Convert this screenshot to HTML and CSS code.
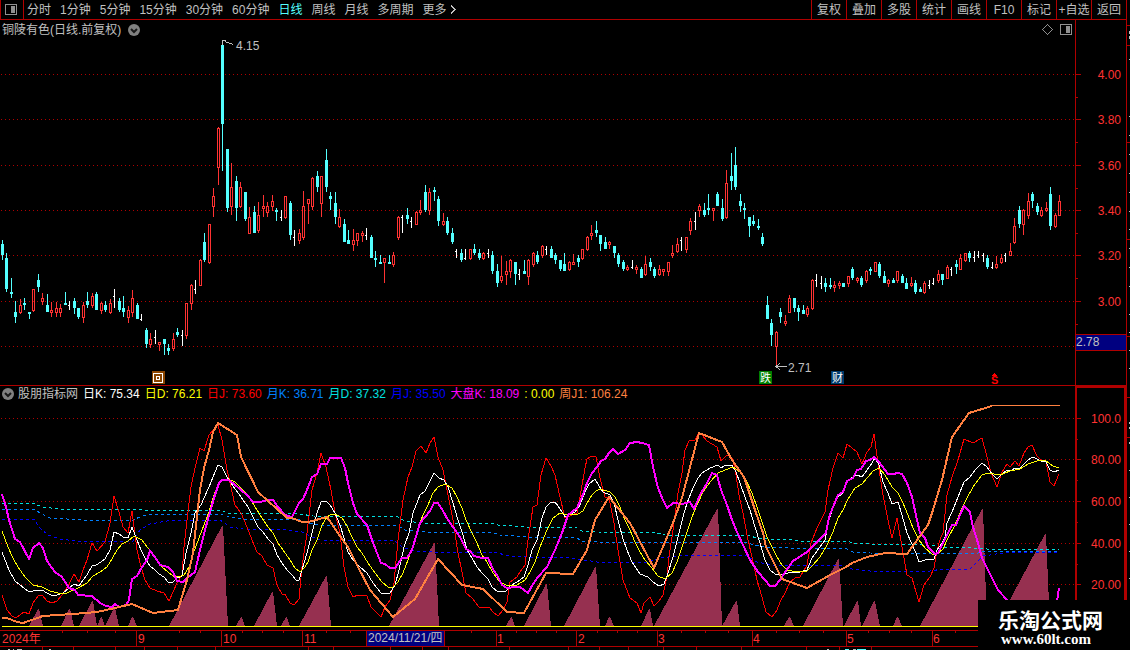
FILE: index.html
```html
<!DOCTYPE html>
<html lang="zh-CN">
<head>
    <meta charset="UTF-8">
    <meta name="viewport" content="width=device-width, initial-scale=1.0">
    <title>铜陵有色 日线</title>
    <link rel="stylesheet" href="styles.css">
</head>
<body>
    <main>
        <!-- 周期工具栏 -->
        <nav class="toolbar">
            <button class="layout-btn" aria-label="布局">
                <svg width="12" height="11" viewBox="0 0 12 11"><rect x="0.5" y="0.5" width="11" height="10" rx="1" class="icon-line"/><rect x="6" y="2" width="4" height="7" class="icon-fill"/></svg>
            </button>
            <div class="periods">
                <button>分时</button>
                <button>1分钟</button>
                <button>5分钟</button>
                <button>15分钟</button>
                <button>30分钟</button>
                <button>60分钟</button>
                <button class="active">日线</button>
                <button>周线</button>
                <button>月线</button>
                <button>多周期</button>
                <button>更多 <svg width="6" height="9" viewBox="0 0 6 9"><path d="M1 0.5L5 4.5L1 8.5" class="icon-line"/></svg></button>
            </div>
            <div class="tools">
                <button>复权</button>
                <button>叠加</button>
                <button>多股</button>
                <button>统计</button>
                <button>画线</button>
                <button>F10</button>
                <button>标记</button>
                <button>+自选</button>
                <button>返回</button>
            </div>
        </nav>

        <!-- K线主图 -->
        <section class="panel">
            <div class="plot">
                <header class="plot-head">
                    <h1>铜陵有色(日线.前复权)</h1>
                    <svg class="toggle" width="12" height="12" viewBox="0 0 12 12"><circle cx="6" cy="6" r="6"/><path d="M3 5L6 8L9 5"/></svg>
                    <svg class="head-icons" width="30" height="11" viewBox="0 0 30 11"><path d="M5.5 0.5L10.5 5.5L5.5 10.5L0.5 5.5Z" class="icon-line"/><rect x="18.5" y="0.5" width="11" height="10" rx="1" class="icon-line"/><rect x="24" y="2" width="4" height="7" class="icon-fill"/></svg>
                </header>
                <svg class="chart" viewBox="0 38 1075 347">
                    <path class="grid" d="M1 74.5H1075M1 119.5H1075M1 165.5H1075M1 210.5H1075M1 255.5H1075M1 301.5H1075M1 346.5H1075"/>
                    <g id="candles"></g>
                    <path class="pointer" d="M222.5 45V40.5H226M225 41.5L233 44.5"/>
                    <text x="236" y="50">4.15</text>
                    <path class="pointer" d="M776 366.5H787M780 363.5L776 366.5L780 369.5"/>
                    <text x="788" y="372">2.71</text>
                    <g class="badge">
                        <rect x="152" y="371" width="13" height="13" fill="#8a4500"/>
                        <rect x="153.5" y="373.5" width="9" height="9" stroke="#fff"/>
                        <rect x="156.5" y="376.5" width="3" height="3" stroke="#fff"/>
                        <rect x="759" y="371" width="13" height="13" fill="#008000"/>
                        <text x="760" y="382">跌</text>
                        <rect x="831" y="371" width="13" height="13" fill="#003a6c"/>
                        <text x="832" y="382">财</text>
                        <path d="M992 376L994.5 373L997 376Z" fill="#f00"/>
                        <text class="dollar" x="991" y="384">S</text>
                    </g>
                </svg>
            </div>
            <svg class="axis" viewBox="0 20 51 365" width="51" height="365">
                <path d="M0.5 20V385M0 74.5H6M0 97.5H3M0 119.5H6M0 142.5H3M0 165.5H6M0 188.5H3M0 210.5H6M0 233.5H3M0 255.5H6M0 278.5H3M0 301.5H6M0 324.5H3"/>
                <text x="46" y="79">4.00</text>
                <text x="46" y="124">3.80</text>
                <text x="46" y="170">3.60</text>
                <text x="46" y="215">3.40</text>
                <text x="46" y="260">3.20</text>
                <text x="46" y="306">3.00</text>
                <rect class="cursor" x="0" y="334.5" width="51" height="16"/>
                <text class="cursor-text" x="1" y="346">2.78</text>
            </svg>
        </section>

        <!-- 指标副图 -->
        <section class="panel indicator">
            <div class="plot">
                <header class="legend">
                    <svg class="toggle" width="12" height="12" viewBox="0 0 12 12"><circle cx="6" cy="6" r="6"/><path d="M3 5L6 8L9 5"/></svg>
                    <span>股朋指标网</span>
                    <span class="c-white">日K: 75.34</span>
                    <span class="c-yellow">日D: 76.21</span>
                    <span class="c-red">日J: 73.60</span>
                    <span class="c-blue">月K: 36.71</span>
                    <span class="c-cyan">月D: 37.32</span>
                    <span class="c-navy">月J: 35.50</span>
                    <span class="c-magenta">大盘K: 18.09</span>
                    <span class="c-yellow">: 0.00</span>
                    <span class="c-orange">周J1: 106.24</span>
                </header>
                <svg class="chart" viewBox="0 402 1075 228">
                    <path class="grid" d="M1 418.5H1075M1 459.5H1075M1 501.5H1075M1 543.5H1075M1 584.5H1075"/>
                    <g id="peaks"></g>
                    <polyline class="line dash s-cyan" points="2,503 33,503 42,507 60,509 133,509 142,510 220,510 227,513 290,513 300,514 313,516 398,517 405,521 423,523 490,523 498,525 527,527 575,527 582,531 598,532 657,533 665,535 750,536 757,538 770,539 790,539 800,541 847,541 853,543 870,544 927,545 943,547 973,548 987,549 1059,549"/>
                    <polyline class="line dash s-blue" points="2,509 33,509 42,514 50,518 67,519 83,520 133,520 142,516 157,514 220,514 230,517 243,519 288,519 300,520 308,523 320,525 397,525 405,530 427,532 490,532 500,535 527,537 575,537 582,541 598,542 747,542 753,545 767,547 790,548 847,549 853,552 870,553 973,554 987,551 1059,551"/>
                    <polyline class="line dash s-navy" points="2,519 34,519 39,527 48,535 60,539 75,541 133,541 140,530 150,524 167,521 220,520 230,527 243,529 288,530 302,532 312,537 320,540 395,541 403,548 417,551 433,552 493,552 510,556 527,557 569,558 578,559 597,562 647,562 660,558 677,556 745,555 757,562 773,565 839,565 852,569 870,571 930,571 943,569 970,569 983,556 1003,553 1059,552"/>
                    <polyline class="line s-red" points="2,595 7,610 12,616 16,618 24,612 29,614 33,603 38,596 42,595 47,601 52,603 57,601 62,595 69,584 74,574 79,582 83,570 87,560 92,543 97,551 105,542 110,523 114,496 119,512 123,527 128,533 132,511 137,550 141,567 145,580 150,588 157,591 164,593 169,601 177,583 182,575 184,547 187,520 191,487 195,468 200,448 204,451 209,435 213,430 218,425 222,440 227,470 231,487 235,505 241,513 247,527 252,540 257,552 262,556 267,565 273,568 277,585 282,594 285,594 290,603 294,605 299,599 302,567 307,533 312,490 317,473 321,453 326,467 331,490 335,513 340,533 344,567 348,587 353,597 358,595 367,596 371,607 381,617 385,607 390,600 394,583 398,540 403,500 408,477 412,467 416,451 421,446 426,453 430,443 434,437 438,457 443,470 447,490 453,520 458,553 462,572 466,593 472,598 479,607 489,607 493,612 498,616 503,610 507,602 510,582 517,577 520,572 525,565 528,540 533,507 537,505 541,475 546,458 551,466 555,475 560,497 565,518 577,513 580,497 585,468 587,459 592,456 596,457 600,478 605,497 609,498 614,523 618,550 623,580 630,598 637,603 641,613 644,603 650,597 654,606 659,601 663,595 667,577 669,557 673,530 678,493 682,473 685,450 689,441 695,440 699,432 702,435 707,441 717,447 721,461 727,455 732,458 735,468 739,495 743,513 748,540 752,557 757,580 762,597 766,612 772,617 777,610 780,602 785,593 790,582 795,578 800,577 807,565 811,543 817,528 825,512 828,490 833,468 838,453 843,458 847,444 857,452 862,464 867,452 871,447 874,434 878,463 883,495 888,520 892,538 897,518 902,547 907,575 912,578 916,592 919,602 924,585 930,577 934,568 937,550 941,537 943,533 947,495 952,477 958,460 964,439 973,443 982,438 987,457 991,473 997,487 1002,472 1007,464 1010,467 1015,461 1019,466 1024,453 1028,447 1032,445 1037,456 1042,461 1046,462 1050,482 1054,486 1059,474"/>
                    <polyline class="line s-white" points="2,552 9,570 15,581 20,585 24,588 29,592 33,591 42,590 47,593 51,595 57,595 63,593 69,588 74,584 79,586 83,580 87,575 92,566 96,565 101,562 105,559 110,550 114,532 119,534 123,537 128,538 132,527 137,540 141,550 146,560 150,566 155,570 159,574 164,577 168,582 173,582 177,578 182,576 186,553 191,533 195,513 201,505 204,498 209,487 213,477 218,465 222,467 227,477 231,483 235,489 239,494 243,500 248,507 253,517 258,527 263,532 268,539 273,544 277,555 282,563 287,570 292,575 296,580 299,580 302,570 307,553 312,533 317,513 321,502 326,501 330,505 335,513 340,525 344,538 348,552 353,560 360,567 367,573 373,583 381,593 390,593 395,585 399,570 404,547 409,533 413,513 420,495 425,491 430,481 434,473 439,478 444,480 448,487 453,503 458,520 463,535 467,550 472,558 477,567 482,573 488,579 492,587 498,592 506,591 510,586 517,582 524,577 528,565 532,550 537,540 542,518 546,507 550,503 555,502 558,506 562,512 565,517 575,512 580,505 585,492 589,484 595,479 599,486 603,492 610,495 614,503 618,520 623,539 627,550 632,562 640,574 648,577 653,582 659,586 664,584 668,573 673,557 678,537 683,517 687,503 693,488 698,478 702,473 710,468 718,465 721,468 726,465 732,465 736,472 740,483 745,497 750,510 755,527 760,543 765,560 770,570 775,574 782,575 788,573 800,572 807,570 812,558 817,551 825,540 829,520 833,508 838,497 843,493 847,481 853,477 857,475 862,477 867,470 872,463 875,458 879,465 883,482 888,493 892,504 898,502 902,515 907,533 911,542 916,553 919,562 925,560 934,559 937,550 942,543 945,537 947,523 952,512 958,497 964,482 970,477 975,470 982,463 987,467 992,474 997,479 1002,474 1006,471 1012,470 1015,468 1019,469 1024,464 1028,460 1033,457 1037,459 1041,461 1046,462 1050,470 1054,472 1059,470"/>
                    <polyline class="line s-yellow" points="2,531 8,547 13,558 18,567 25,577 33,585 42,587 50,591 58,593 67,593 78,588 87,583 93,576 100,572 107,567 112,559 117,550 122,544 128,541 134,536 142,540 148,548 155,557 162,567 168,572 173,576 178,577 184,575 189,567 193,554 199,538 204,525 209,512 213,498 217,487 222,480 228,479 235,482 241,488 247,495 252,502 257,510 262,518 268,527 273,533 278,543 283,550 290,560 295,568 300,572 305,567 308,562 312,550 317,540 322,525 327,517 332,514 337,515 342,518 347,526 352,537 357,547 362,553 368,563 375,573 382,582 388,587 393,587 398,582 403,573 408,560 413,545 418,528 423,515 428,505 433,493 438,487 445,484 452,488 457,497 462,508 466,520 472,533 477,543 482,555 487,562 493,573 500,582 508,586 517,585 525,580 530,572 535,562 540,547 547,530 553,518 560,513 568,515 578,514 583,511 587,503 592,495 596,491 600,489 610,492 615,497 620,507 625,520 630,530 635,542 640,552 645,560 652,568 658,576 665,579 672,573 677,562 682,547 687,532 692,517 697,505 703,492 710,482 718,473 725,470 733,467 740,472 747,482 752,493 757,507 762,522 767,537 772,547 777,557 782,565 787,570 797,572 807,571 813,565 820,557 827,545 833,532 838,518 843,510 848,499 855,488 862,484 868,477 873,471 879,468 885,475 892,487 898,493 903,503 908,515 913,528 919,540 925,548 932,554 937,554 943,549 948,538 955,525 962,508 967,498 973,487 982,475 988,473 1000,475 1010,471 1020,469 1028,464 1037,461 1045,460 1053,466 1059,468"/>
                    <polyline class="line thick s-magenta" points="2,494 6,507 9,520 15,539 20,542 29,559 33,548 39,543 43,548 47,561 55,572 62,577 69,588 75,590 78,595 92,596 100,603 106,606 112,607 115,604 119,607 126,605 129,600 132,579 137,576 142,567 147,560 150,551 155,557 160,565 168,567 173,572 177,581 183,582 187,578 195,572 200,550 205,530 210,512 215,495 219,483 222,480 228,480 233,483 242,491 247,495 253,502 260,502 268,500 273,500 278,507 285,515 292,517 299,503 303,499 307,490 312,477 317,474 321,464 327,464 330,458 341,458 345,468 348,483 353,503 357,514 367,525 372,540 377,553 381,563 385,564 390,568 395,568 402,558 407,558 412,550 417,533 420,523 425,517 430,511 434,503 438,503 443,511 448,520 453,527 460,537 466,549 470,551 474,556 482,558 488,558 493,569 498,577 502,585 507,588 515,587 520,587 528,593 533,584 538,577 547,567 555,550 562,533 568,515 577,508 582,497 587,483 592,473 597,467 601,461 605,459 609,453 613,449 618,454 625,450 630,443 637,442 642,443 649,445 653,467 658,488 663,500 667,508 673,503 682,504 690,502 694,509 700,495 707,483 712,473 717,475 721,490 727,505 732,520 737,532 743,545 750,560 758,572 765,580 770,586 775,586 780,580 783,575 793,561 807,552 817,542 826,533 829,517 833,507 838,495 843,492 847,481 853,478 857,470 861,469 866,461 870,460 874,457 879,462 888,474 893,474 898,473 902,474 907,483 912,497 917,520 920,533 925,538 928,547 935,554 938,553 943,543 948,533 952,525 956,525 960,515 964,506 970,512 973,527 978,543 982,558 987,568 992,578 998,590 1007,600 1015,606 1050,606 1057,602 1059,588"/>
                    <polyline class="line thick s-orange" points="2,618 7,618 17,622 23,623 43,616 73,614 97,612 115,608 132,604 153,613 178,610 187,580 193,553 200,490 204,468 209,450 213,432 218,423 237,435 241,457 258,492 287,518 292,518 302,522 308,522 327,517 340,536 348,547 358,567 370,590 393,617 415,599 438,559 462,585 483,589 507,612 524,613 546,573 573,574 587,550 595,520 609,497 630,523 647,555 654,568 673,523 682,498 690,467 699,433 722,442 732,460 744,477 755,510 763,533 766,547 782,579 807,588 830,575 846,567 852,563 867,557 885,553 907,554 928,525 933,510 942,480 952,437 969,413 992,406"/>
                    <path class="line s-orange" d="M992 405.5H1060"/>
                    <path class="line s-yellow" d="M2 626.5H1060"/>
                </svg>
            </div>
            <svg class="axis" viewBox="0 386 51 244" width="51" height="244">
                <path class="frame" d="M1 630V387H50V630"/>
                <path d="M0 418.5H6M0 439.5H3M0 459.5H6M0 480.5H3M0 501.5H6M0 522.5H3M0 543.5H6M0 564.5H3M0 584.5H6"/>
                <text x="46" y="423">100.0</text>
                <text x="46" y="464">80.00</text>
                <text x="46" y="506">60.00</text>
                <text x="46" y="548">40.00</text>
                <text x="46" y="589">20.00</text>
            </svg>
        </section>

        <!-- 时间轴 -->
        <svg class="timeline" viewBox="0 630 1126 20">
            <path d="M0 630.5H1126M0 646.5H1126M136.5 630V646M221.5 630V646M302.5 630V646M366.5 630V646M444.5 630V646M496.5 630V646M576.5 630V646M657.5 630V646M752.5 630V646M846.5 630V646M932.5 630V646"/>
            <path d="M62.5 631V633M87.5 631V633M115.5 631V633M179.5 631V633M200.5 631V633M242.5 631V633M262.5 631V633M283.5 631V633M326.5 631V633M350.5 631V633M471.5 631V633M516.5 631V633M536.5 631V633M556.5 631V633M597.5 631V633M617.5 631V633M637.5 631V633M681.5 631V633M705.5 631V633M728.5 631V633M776.5 631V633M799.5 631V633M823.5 631V633M868.5 631V633M889.5 631V633M911.5 631V633M955.5 631V633"/>
            <path d="M42.5 647V650M73.5 647V650M115.5 647V650M144.5 647V650M177.5 647V650M215.5 647V650M308.5 647V650M333.5 647V650M390.5 647V650M422.5 647V650M448.5 647V650M509.5 647V650M568.5 647V650M599.5 647V650M628.5 647V650M663.5 647V650M696.5 647V650M741.5 647V650M806.5 647V650M839.5 647V650M871.5 647V650"/>
            <path class="bits" d="M8 649.5H10M13 649.5H14M17 649.5H22M49 649.5H51M827 649.5H829M853 649.5H856"/>
            <path class="bits-cyan" d="M845 649.5H849M857 649.5H866"/>
            <rect class="cursor" x="367" y="631" width="77" height="15"/>
            <text x="2" y="643">2024年</text>
            <text x="138" y="643">9</text>
            <text x="223" y="643">10</text>
            <text x="304" y="643">11</text>
            <text class="cursor-text" x="368" y="642">2024/11/21/四</text>
            <text x="497" y="643">1</text>
            <text x="578" y="643">2</text>
            <text x="658" y="643">3</text>
            <text x="753" y="643">4</text>
            <text x="847" y="643">5</text>
            <text x="933" y="643">6</text>
        </svg>
    </main>

    <!-- 右侧栏边缘 -->
    <aside class="edge">
        <svg width="3" height="600" viewBox="0 0 3 600">
            <path d="M0 25.5H3M0 45.5H3M0 142.5H3M0 239.5H3M0 336.5H3M0 397.5H3M0 437.5H3"/>
            <path class="bits" d="M2.5 31V34M2.5 36V39M2.5 59V60M2.5 116V117M2.5 135V136M2.5 154V155M2.5 173V174M2.5 192V193M2.5 211V212M2.5 229V230M2.5 248V249M2.5 267V268M2.5 286V287M2.5 314V315M2.5 332V333M2.5 350V351M2.5 368V369M2.5 422V424M2.5 427V429M2.5 442V444M2.5 470V471M2.5 497V498M2.5 524V525M2.5 551V552M2.5 578V579"/>
        </svg>
    </aside>

    <div class="site-mark">
        <strong>乐淘公式网</strong>
        <a href="#">www.60lt.com</a>
    </div>

    <script src="chart.js"></script>
</body>
</html>
```
FILE: styles.css
```css
* {
    box-sizing: border-box;
}

body {
    position: relative;
    display: flex;
    min-height: 100vh;
    margin: 0;
    background-color: #000;
    color: #c0c0c0;
    font: 12px/16px "Liberation Sans", "Noto Sans CJK SC", sans-serif;
    overflow: hidden;
}

main {
    flex: 1;
    min-width: 0;
}

svg {
    display: block;
    shape-rendering: crispEdges;
}

text {
    fill: #c0c0c0;
}

button {
    padding: 0;
    border: 0;
    background: none;
    color: inherit;
    font: inherit;
    white-space: nowrap;
    cursor: pointer;
}

button:hover {
    color: #fff;
}

/* 工具栏 */
.toolbar {
    display: flex;
    height: 20px;
    border-bottom: 1px solid #b00000;
}

.layout-btn {
    width: 24px;
    padding-left: 4px;
    border-left: 1px solid #b00000;
    border-right: 1px solid #b00000;
}

.periods {
    display: flex;
    flex: 1;
    gap: 9px;
    padding-left: 3px;
}

.periods svg {
    display: inline-block;
}

.periods .active {
    color: #54ffff;
}

.tools {
    display: flex;
}

.tools button {
    width: 35px;
    border-left: 1px solid #b00000;
}

.icon-line {
    fill: none;
    stroke: #909090;
}

.periods .icon-line {
    stroke: #c0c0c0;
}

.icon-fill {
    fill: #909090;
}

/* 图表 */
.panel {
    display: grid;
    grid-template-columns: 1fr 51px;
}

.plot-head {
    display: flex;
    align-items: center;
    gap: 7px;
    height: 18px;
    padding: 1px 3px 0 2px;
}

.plot-head h1 {
    margin: 0;
    font-size: 12px;
    font-weight: normal;
}

.head-icons {
    margin-left: auto;
}

.toggle {
    shape-rendering: auto;
}

.toggle circle {
    fill: #808080;
}

.toggle path {
    fill: none;
    stroke: #181818;
    stroke-width: 2;
}

.chart {
    width: 100%;
    height: auto;
}

.grid {
    stroke: #b00000;
    stroke-dasharray: 1 3;
}

.up rect {
    fill: #ff3232;
}

.up .body {
    fill: none;
    stroke: #ff3232;
}

.down rect {
    fill: #54ffff;
}

.flat rect {
    fill: #fff;
}

.pointer {
    fill: none;
    stroke: #c0c0c0;
}

.badge rect:not([fill]) {
    fill: none;
}

.badge text {
    fill: #fff;
    font-size: 11px;
}

.badge .dollar {
    fill: #f00;
    font-weight: bold;
}

.axis path,
.timeline path,
.edge path {
    fill: none;
    stroke: #b00000;
}

.axis .frame {
    stroke-width: 2;
}

.axis text,
.timeline text {
    fill: #ff3232;
}

.axis text {
    text-anchor: end;
}

.cursor {
    fill: #000080;
}

.axis .cursor {
    stroke: #b00000;
}

.axis .cursor-text,
.timeline .cursor-text {
    fill: #c0c0c0;
    text-anchor: start;
}

/* 指标 */
.indicator {
    border-top: 1px solid #b00000;
}

.legend {
    display: flex;
    align-items: center;
    gap: 5px;
    height: 16px;
    padding-left: 2px;
    white-space: nowrap;
}

.legend .toggle {
    margin-right: -1px;
}

.c-white { color: #fff; }
.c-yellow { color: #ff0; }
.c-red { color: #f00; }
.c-blue { color: #0080ff; }
.c-cyan { color: #00e0e0; }
.c-navy { color: #00f; }
.c-magenta { color: #f0f; }
.c-orange { color: #ff8040; }

#peaks {
    fill: #963050;
}

.line {
    fill: none;
    stroke-width: 1;
}

.thick {
    stroke-width: 2;
}

.dash {
    stroke-dasharray: 3 3;
}

.s-white { stroke: #fff; }
.s-yellow { stroke: #ff0; }
.s-red { stroke: #f00; }
.s-blue { stroke: #0080ff; }
.s-cyan { stroke: #00e0e0; }
.s-navy { stroke: #00f; }
.s-magenta { stroke: #f0f; }
.s-orange { stroke: #ff8040; }

/* 时间轴 */
.timeline {
    width: 100%;
    height: auto;
}

.timeline .bits,
.edge .bits {
    stroke: #c0c0c0;
}

.timeline .bits-cyan {
    stroke: #54ffff;
}

.edge {
    width: 4px;
    border-left: 1px solid #b00000;
}

/* 网站标识 */
.site-mark {
    position: absolute;
    right: 0;
    bottom: 0;
    display: flex;
    flex-direction: column;
    width: 152px;
    height: 50px;
    padding: 7px 0 0 20px;
    background-color: #000;
    color: #fff;
}

.site-mark strong {
    font: bold 21px/24px "Noto Sans CJK SC", sans-serif;
}

.site-mark a {
    padding-left: 3px;
    color: #fff;
    font: bold 15px/16px "Liberation Serif", serif;
    text-decoration: none;
}
```
FILE: chart.js
```js
// d = 跌, u = 涨, f = 平; 最高, 实体上沿, 实体下沿, 最低
const candles = `
d240,244,255,260 d253,258,289,292 d278,292,294,298 d301,312,317,323 u299,305,313,314 d298,303,305,310
d312,312,314,319 u289,289,311,312 d274,280,287,292 u293,298,302,305 d294,305,312,312 u302,310,313,317
u302,308,313,317 u304,308,313,317 d292,303,305,305 f301,305,305,310 d298,301,308,314 d308,308,317,319
u302,305,318,323 d292,301,305,308 u293,296,306,308 d292,294,310,310 u302,303,311,314 d301,305,310,312
u299,303,313,314 f289,296,296,308 d298,301,310,312 d296,308,312,317 u306,310,318,323 u290,298,313,317
d303,305,319,319 f314,319,319,321 d328,330,344,348 u333,339,345,348 f330,337,337,344 u342,342,345,351
d339,339,344,355 d344,348,351,355 u333,339,349,351 d328,332,335,337 f330,335,335,346 u303,303,336,339
u284,285,304,310 f280,289,289,294 u259,260,286,286 d233,242,260,262 u224,224,263,264 u188,196,207,217
u127,128,168,185 d40,45,124,171 d149,149,208,212 u163,187,207,215 d176,181,208,221 u182,187,207,208
d192,192,219,221 u207,217,234,234 d206,212,233,233 u202,215,231,233 u195,206,209,217 u202,206,213,217
u195,201,207,211 d208,210,212,221 f210,217,217,221 u196,196,218,219 d201,203,235,240 f230,237,237,246
u229,233,241,244 u191,206,238,240 u199,199,204,224 u177,178,207,210 d171,176,187,192 u176,176,204,217
d149,160,187,192 d192,196,199,210 d192,203,217,224 u209,217,227,228 d219,224,242,242 d230,240,244,244
u229,240,245,251 u233,233,241,246 u231,233,236,242 f228,235,235,240 d235,237,258,258 d251,258,260,267
d255,262,264,264 u258,258,263,283 d255,262,264,264 u252,255,265,267 u216,217,238,240 f215,217,217,233
d208,215,219,224 f217,221,221,228 u211,212,225,225 u200,210,213,215 d185,192,210,212 u188,192,211,215
d187,190,192,201 d196,199,221,226 u213,221,225,226 d217,221,233,235 d228,233,242,244 f249,251,251,258
d249,253,260,262 f249,258,258,260 u249,249,259,260 d244,249,253,255 d249,253,258,260 u252,253,259,260
f249,253,253,258 d251,255,271,274 d264,271,283,287 u256,276,281,283 u261,271,275,285 u259,260,272,278
d262,262,274,285 f269,274,274,280 d260,271,274,274 u259,260,277,285 u252,253,265,267 d251,255,262,264
u245,246,256,258 f246,249,249,255 d246,249,258,258 d253,255,260,264 d260,260,269,271 d253,264,271,271
u261,262,270,271 u254,262,265,265 d255,258,262,267 u249,249,259,260 u236,237,250,251 u225,233,236,240
d221,230,233,237 d235,235,244,251 d237,242,249,249 u241,242,245,249 d246,246,253,258 d253,255,264,267
d260,262,269,271 u265,267,270,271 f260,267,267,269 u265,267,270,274 d267,269,278,278 u256,264,275,276
d258,262,267,271 d267,269,276,278 u265,269,275,276 u269,269,272,276 u262,262,272,276 u245,253,256,258
u238,244,252,253 f237,240,240,251 u237,237,250,253 u218,221,231,235 f212,221,221,230 u204,206,211,217
d203,210,215,217 d194,208,210,215 u208,208,211,221 d192,194,206,206 d199,208,219,221 u170,183,218,219
d153,176,181,190 d147,165,187,190 d194,201,206,212 d203,208,210,219 d217,217,226,237 d215,221,224,226
d219,226,228,230 d233,237,244,246 d296,305,319,319 d319,323,335,346 u331,332,347,366 d308,312,317,323
u315,321,324,326 u295,298,313,313 d298,298,308,312 d305,308,312,321 d305,310,314,314 u306,308,315,317
u279,280,309,310 f274,280,280,287 f276,283,283,289 d278,283,287,292 d278,285,287,289 u281,285,288,292
u281,283,286,289 d283,283,287,287 u276,276,284,287 d267,269,278,280 u277,278,281,283 d276,278,285,287
u270,271,281,283 d267,269,271,275 u262,262,272,272 d262,264,276,278 d271,276,283,283 u279,280,284,287
d278,280,283,283 u271,271,281,283 d274,276,283,283 d278,283,289,289 u277,283,286,287 d280,283,292,294
d287,289,292,292 u281,283,293,294 f280,285,285,289 f278,283,283,285 u270,274,281,283 d274,274,280,285
u265,267,279,279 f267,269,269,276 d260,264,267,274 u254,258,270,270 u253,253,261,262 d251,253,258,262
f251,257,257,262 f251,255,255,258 f253,255,255,262 d255,258,267,269 f262,267,267,269 u256,264,268,269
u254,258,263,264 f253,255,255,262 u243,251,256,256 u218,226,243,244 d206,210,224,228 u209,210,225,235
u193,201,216,219 d192,194,201,208 d203,206,212,215 u207,210,216,217 u202,208,211,212 d187,194,226,230
u213,215,227,228 u195,201,216,216`.trim().split(/\s+/);

const rect = (x, y, w, h, cls = "") => `<rect class="${cls}" x="${x}" y="${y}" width="${w}" height="${h}"/>`;
const names = { d: "down", u: "up", f: "flat" };

document.getElementById("candles").innerHTML = candles.map((item, i) => {
    const type = item[0];
    const [high, top, bottom, low] = item.slice(1).split(",").map(Number);
    const x = Math.floor(2 + i * 4.5);
    let shape;

    if (type === "f") {
        shape = rect(x, high, 1, low - high) + rect(x - 1, top, 1, 1);
    } else if (type === "d") {
        shape = rect(x, high, 1, low - high) + rect(x - 1, top, 3, bottom - top);
    } else {
        shape = rect(x, high, 1, top - high) + rect(x, bottom, 1, low - bottom)
            + rect(x - 0.5, top + 0.5, 2, bottom - top - 1, "body");
    }
    return `<g class="${names[type]}">${shape}</g>`;
}).join("");

// 左, 顶点x, 顶点y, 右
const peaks = [
    [29, 38, 609, 43], [61, 69, 609, 74], [79, 92, 601, 97], [97, 101, 617, 105], [105, 114, 608, 119],
    [128, 132, 617, 137], [169, 222, 526, 228], [236, 241, 617, 245], [254, 272, 592, 277], [281, 286, 617, 290],
    [299, 326, 576, 331], [389, 434, 543, 439], [506, 511, 617, 515], [524, 546, 584, 551], [564, 595, 567, 600],
    [605, 609, 617, 614], [641, 649, 609, 653], [654, 717, 509, 722], [722, 736, 601, 740], [784, 789, 617, 794],
    [803, 838, 559, 843], [844, 857, 601, 861], [862, 874, 601, 880], [893, 897, 617, 902], [920, 982, 509, 987],
    [996, 1045, 534, 1050]
];

document.getElementById("peaks").innerHTML = peaks.map(([left, x, y, right]) =>
    `<polygon points="${left},626 ${x},${y} ${x + 1},${y} ${right},626"/>`
).join("");
```
